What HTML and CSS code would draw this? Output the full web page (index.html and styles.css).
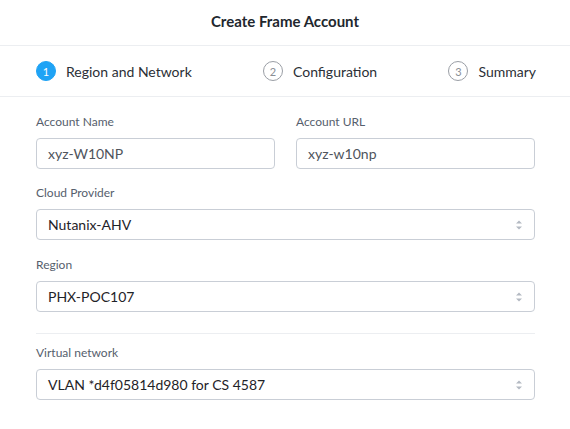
FILE: index.html
```html
<!DOCTYPE html>
<html>
<head>
<meta charset="utf-8">
<link rel="stylesheet" href="styles.css">
</head>
<body>
<div class="modal">
  <header class="title">Create Frame Account</header>
  <nav class="steps">
    <div class="step active"><span class="num">1</span><span class="label">Region and Network</span></div>
    <div class="step"><span class="num">2</span><span class="label">Configuration</span></div>
    <div class="step"><span class="num">3</span><span class="label">Summary</span></div>
  </nav>
  <main class="form">
    <div class="row two">
      <div class="field">
        <label class="flabel">Account Name</label>
        <div class="input">xyz-W10NP</div>
      </div>
      <div class="field">
        <label class="flabel">Account URL</label>
        <div class="input">xyz-w10np</div>
      </div>
    </div>
    <div class="field">
      <label class="flabel">Cloud Provider</label>
      <div class="select"><span>Nutanix-AHV</span><svg class="arrows" width="8" height="12" viewBox="0 0 8 12"><path d="M4 1.5 L7 4.5 H1 Z M4 10.5 L7 7.5 H1 Z" fill="#b3b9c2"/></svg></div>
    </div>
    <div class="field">
      <label class="flabel">Region</label>
      <div class="select"><span>PHX-POC107</span><svg class="arrows" width="8" height="12" viewBox="0 0 8 12"><path d="M4 1.5 L7 4.5 H1 Z M4 10.5 L7 7.5 H1 Z" fill="#b3b9c2"/></svg></div>
    </div>
    <hr class="sep">
    <div class="field">
      <label class="flabel">Virtual network</label>
      <div class="select"><span>VLAN *d4f05814d980 for CS 4587</span><svg class="arrows" width="8" height="12" viewBox="0 0 8 12"><path d="M4 1.5 L7 4.5 H1 Z M4 10.5 L7 7.5 H1 Z" fill="#b3b9c2"/></svg></div>
    </div>
  </main>
</div>
</body>
</html>
```
FILE: styles.css
```css
* { box-sizing: border-box; }
html, body { margin: 0; padding: 0; background: #fff; }
body { font-family: Lato, "Open Sans", sans-serif; color: #222; }
.modal { width: 570px; }
.title {
  height: 46px;
  display: flex; align-items: center; justify-content: center;
  font-size: 15px; font-weight: 700; color: #22272e;
  border-bottom: 1px solid #eceef1;
  padding-bottom: 3px;
}
.steps {
  height: 51px;
  display: flex; justify-content: space-between; align-items: center;
  padding: 0 34px 0 36px;
  border-bottom: 1px solid #eceef1;
}
.step { display: flex; align-items: center; gap: 10px; font-size: 14px; color: #2b2f36; }
.num {
  width: 20px; height: 20px; border-radius: 50%;
  border: 1px solid #9a9ea5; color: #8a8e95;
  display: flex; align-items: center; justify-content: center;
  font-size: 11px;
}
.step.active .num { background: #1fa3f5; border-color: #1fa3f5; color: #fff; }
.form { padding: 17px 35px 0 36px; display: flex; flex-direction: column; }
.row.two { display: grid; grid-template-columns: 1fr 1fr; gap: 21px; }
.field { display: flex; flex-direction: column; margin-bottom: 17px; }
.row.two .field { margin-bottom: 16px; }
.flabel { font-size: 12px; color: #56606d; margin-bottom: 8px; line-height: 16px; }
.input, .select {
  height: 31px; border: 1px solid #c9ced6; border-radius: 4px;
  display: flex; align-items: center; padding: 0 11px;
  font-size: 14px;
}
.input { color: #4f555c; }
.select { justify-content: space-between; color: #1f2328; padding-right: 11px; }
.arrows { display: block; }
.sep { border: 0; border-top: 1px solid #eceef1; margin: 4px 0 11px; }
```
